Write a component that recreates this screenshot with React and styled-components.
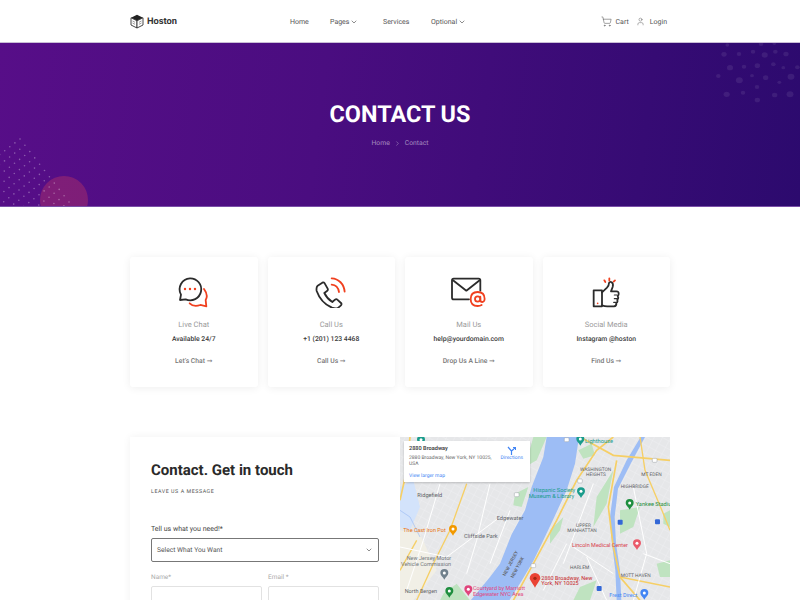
import React from 'react'
import styled, { createGlobalStyle } from 'styled-components'
import { ChevronDown, ChevronRight, ShoppingCart, User } from 'lucide-react'

const GlobalStyle = createGlobalStyle`
  html, body { margin: 0; padding: 0; height: 100%; overflow: hidden; background: #fff; }
  body { font-family: Roboto, "Liberation Sans", sans-serif; color: #222; text-rendering: geometricPrecision; }
  * { box-sizing: border-box; }
`

const Page = styled.div`
  height: 600px;
  overflow: hidden;
`

const Header = styled.header`
  height: 43px;
  background: #fff;
  border-bottom: 1px solid #c9bdd6;
  display: flex;
  align-items: center;
  padding: 1px 133px 0 130px;
`

const Brand = styled.div`
  width: 160px;
  display: flex;
  align-items: center;
  gap: 3px;
  font-size: 9.3px;
  font-weight: 700;
  color: #333;
`

const Nav = styled.nav`
  display: flex;
  align-items: center;
`

const NavItem = styled.a`
  display: flex;
  align-items: center;
  gap: 1px;
  width: ${({ $w }) => $w}px;
  font-size: 7px;
  color: #555;
`

const Actions = styled.div`
  margin-left: auto;
  display: flex;
  align-items: center;
  font-size: 7px;
  color: #555;
`

const CartLabel = styled.span`
  margin: 0 7px 0 4px;
`

const LoginLabel = styled.span`
  margin-left: 5px;
`

const Hero = styled.section`
  position: relative;
  height: 164px;
  overflow: hidden;
  background: linear-gradient(97deg, #570e88 0%, #4a0d80 40%, #2c0a6e 100%);
  border-bottom: 1px solid #7a4fa8;
  display: flex;
  flex-direction: column;
  align-items: center;
  color: #fff;
`

const Decor = styled.svg`
  position: absolute;
  left: 0;
  top: 0;
`

const HeroTitle = styled.h1`
  position: relative;
  margin: 57px 0 0;
  font-size: 23.4px;
  line-height: 28px;
  font-weight: 700;
`

const Crumbs = styled.div`
  position: relative;
  margin-top: 11px;
  display: flex;
  align-items: center;
  gap: 4px;
  font-size: 6.8px;
  color: rgba(255, 255, 255, 0.5);
`

const Cards = styled.section`
  display: grid;
  grid-template-columns: repeat(4, 127.5px);
  justify-content: space-between;
  margin: 50px 130px 0;
`

const Card = styled.article`
  height: 130px;
  padding-top: 18px;
  background: #fff;
  border-radius: 3px;
  box-shadow: 0 1px 8px rgba(0, 0, 0, 0.07);
  display: flex;
  flex-direction: column;
  align-items: center;
`

const CardIcon = styled.svg`
  width: 36.67px;
  height: 33.33px;
  fill: none;
  stroke-width: 5.4;
  stroke-linecap: round;
  stroke-linejoin: round;
`

const CardTitle = styled.div`
  margin-top: 11.5px;
  font-size: 7.5px;
  line-height: 10px;
  color: #9a9a9a;
`

const CardValue = styled.div`
  margin-top: 4px;
  font-size: 6.8px;
  line-height: 10px;
  font-weight: 500;
  color: #3a3a3a;
`

const CardLink = styled.a`
  margin-top: 12.5px;
  font-family: Roboto, "DejaVu Sans", sans-serif;
  font-size: 6.8px;
  line-height: 10px;
  font-weight: 500;
  color: #777;
`

const Contact = styled.section`
  display: flex;
  margin: 50px 130px 0;
  height: 260px;
`

const FormPanel = styled.div`
  width: 270px;
  padding: 24px 21px;
  background: #fff;
  box-shadow: 0 0 8px rgba(0, 0, 0, 0.06);
`

const Heading = styled.h2`
  margin: 0;
  font-size: 15px;
  line-height: 18px;
  font-weight: 700;
  color: #2a2a2a;
`

const Eyebrow = styled.div`
  margin-top: 9px;
  font-size: 5.3px;
  line-height: 8px;
  letter-spacing: 0.55px;
  color: #555;
`

const NeedLabel = styled.div`
  margin-top: 28px;
  font-size: 7px;
  line-height: 10px;
  color: #444;
`

const SelectBox = styled.div`
  margin-top: 4px;
  height: 24px;
  padding: 0 5px;
  border: 1px solid #777;
  border-radius: 2px;
  display: flex;
  align-items: center;
  justify-content: space-between;
  font-size: 6.7px;
  color: #555;
`

const FieldRow = styled.div`
  margin-top: 10px;
  display: grid;
  grid-template-columns: 1fr 1fr;
  gap: 6px;
`

const Field = styled.label`
  display: block;
  font-size: 6.5px;
  line-height: 10px;
  color: #aaa;
`

const FieldInput = styled.div`
  margin-top: 4px;
  height: 24px;
  border: 1px solid #e2e2e2;
  border-radius: 2px;
`

const MapPanel = styled.div`
  position: relative;
  flex: 1;
  overflow: hidden;
  background: #e8eaed;
`

const MapArt = styled.svg`
  display: block;
  width: 270px;
  height: 163.33px;
  font-family: Roboto, "Liberation Sans", sans-serif;
`

const MapCard = styled.div`
  position: absolute;
  left: 4px;
  top: 4px;
  width: 126px;
  height: 41px;
  padding: 5px;
  background: #fff;
  box-shadow: 0 1px 2px rgba(0, 0, 0, 0.2);
  display: flex;
  justify-content: space-between;
`

const MapCardText = styled.div`
  width: 88px;
  font-size: 5px;
  line-height: 6px;
  color: #666;
`

const MapCardName = styled.div`
  font-size: 5.6px;
  font-weight: 500;
  color: #333;
  margin-bottom: 3px;
`

const MapCardLink = styled.div`
  margin-top: 6px;
  color: #4285f4;
`

const DirectionLink = styled.div`
  margin-right: 2px;
  display: flex;
  flex-direction: column;
  align-items: center;
  font-size: 5px;
  color: #4285f4;
`

const leftDots = []
for (let i = 0; i <= 10; i++) {
  for (let j = 0; j <= 9; j++) {
    const x = 20 + i * 4.9 - j * 5.1
    const y = 96 + i * 6.3 + j * 3.9
    if (x > -2 && y < 165) leftDots.push([x, y])
  }
}

const blobs = [
  [142, 30, 5], [132, 58, 7], [177, 57, 6], [219, 50, 6], [254, 60, 8], [286, 50, 6], [318, 57, 7],
  [150, 98, 8], [192, 95, 6], [232, 92, 7], [280, 88, 6], [310, 98, 5], [352, 97, 6], [115, 123, 6],
  [178, 136, 9], [216, 122, 5], [257, 128, 7], [298, 142, 5], [333, 125, 9], [231, 156, 6],
  [140, 178, 8], [189, 173, 6], [284, 180, 7], [330, 178, 9], [232, 195, 7], [243, 27, 6], [283, 25, 5],
]

function HeroDecor() {
  return (
    <Decor width="800" height="164" viewBox="0 0 800 164">
      <circle cx="64" cy="157" r="24" fill="#d8405a" opacity="0.33" />
      {leftDots.map(([x, y]) => (
        <circle key={`${x}-${y}`} cx={x} cy={y} r="0.8" fill="#fff" opacity="0.32" />
      ))}
      {blobs.map(([x, y, r]) => (
        <ellipse key={`${x}-${y}`} cx={680 + x / 3} cy={y / 3 - 8} rx={r / 2.6} ry={r / 3} fill="#fff" opacity="0.08" />
      ))}
    </Decor>
  )
}

function Logo() {
  return (
    <svg width="14" height="15" viewBox="0 0 14 15">
      <path d="M7 .8 13 3.8 7 6.8 1 3.8Z" fill="#222" />
      <path d="M1 3.8 7 6.8V14L1 11Z" fill="#fff" stroke="#333" strokeWidth=".9" strokeLinejoin="round" />
      <path d="M13 3.8 7 6.8V14L13 11Z" fill="#fff" stroke="#333" strokeWidth=".9" strokeLinejoin="round" />
      <path d="M2.5 7 5 8.3M2.5 9 5 10.3M9 8.3 11.5 7M9 10.3 11.5 9" stroke="#777" strokeWidth=".7" />
    </svg>
  )
}

const DARK = '#2b2b2b'
const RED = '#f0401f'

function ChatIcon() {
  return (
    <CardIcon viewBox="151 60 110 100">
      <path d="M196 70a33 33 0 1 1-13 63l-17 2 3-16a33 33 0 0 1 27-49Z" stroke={DARK} />
      <path d="M238 102c9 12 10 25 5 33l2 19-18-4c-12 4-24 3-32-5" stroke={RED} />
      <g fill={RED} stroke="none">
        <circle cx="181" cy="102" r="3.6" />
        <circle cx="196" cy="102" r="3.6" />
        <circle cx="211" cy="102" r="3.6" />
      </g>
    </CardIcon>
  )
}

function PhoneIcon() {
  return (
    <CardIcon viewBox="565 60 110 100">
      <path d="M579 92l14-9q4-2 7 2l9 16q2 4-2 7l-8 6q8 17 24 27l8-7q4-3 7 0l11 10q3 3 0 7l-7 6q-7 6-20 1-33-14-46-50-2-11 3-16Z" stroke={DARK} />
      <path d="M621 89c12 1 20 10 22 22" stroke={RED} />
      <path d="M621 70c21 1 37 17 39 40" stroke={RED} />
    </CardIcon>
  )
}

function MailIcon() {
  return (
    <CardIcon viewBox="151 60 110 100">
      <path d="M208 133h-46q-5 0-5-5V76q0-5 5-5h75q5 0 5 5v31" stroke={DARK} />
      <path d="M160 76l40 31 40-31" stroke={DARK} />
      <circle cx="234" cy="132" r="8" stroke={RED} />
      <path d="M242 125v10q0 6 6 6t7-9q0-21-21-21t-21 21 21 21q7 0 12-3" stroke={RED} />
    </CardIcon>
  )
}

function LikeIcon() {
  return (
    <CardIcon viewBox="565 60 110 100">
      <path d="M582 106h25v48h-25Z" stroke={DARK} />
      <path d="M607 112l15-14q6-6 6-14 3-5 8-2 6 4 3 14l-5 13h16q8 0 7 8 0 4-3 6 4 6-1 11 2 7-3 10 1 9-7 10h-20q-8 0-16-3" stroke={DARK} />
      <path d="M644 120h8M644 131h7M642 142h6" stroke={DARK} strokeWidth="3.5" />
      <circle cx="594" cy="145" r="2.5" fill={RED} stroke="none" />
      <path d="M614 76l3 5M629 70v7M646 76l-4 4" stroke={RED} />
    </CardIcon>
  )
}

const cards = [
  { title: 'Live Chat', value: 'Available 24/7', link: 'Let\u2019s Chat \u2192', Icon: ChatIcon },
  { title: 'Call Us', value: '+1 (201) 123 4468', link: 'Call Us \u2192', Icon: PhoneIcon },
  { title: 'Mail Us', value: 'help@yourdomain.com', link: 'Drop Us A Line \u2192', Icon: MailIcon },
  { title: 'Social Media', value: 'Instagram @hoston', link: 'Find Us \u2192', Icon: LikeIcon },
]

const mapLabels = [
  { x: 52, y: 201, t: 'Ridgefield', fill: '#5f6368', size: 17 },
  { x: 290, y: 270, t: 'Edgewater', fill: '#5f6368', size: 17 },
  { x: 192, y: 323, t: 'Cliffside Park', fill: '#5f6368', size: 17 },
  { x: 540, y: 121, t: 'WASHINGTON', fill: '#5f6368', size: 14.5 },
  { x: 558, y: 136, t: 'HEIGHTS', fill: '#5f6368', size: 14.5 },
  { x: 724, y: 138, t: 'MT EDEN', fill: '#5f6368', size: 14.5 },
  { x: 662, y: 174, t: 'HIGHBRIDGE', fill: '#5f6368', size: 14.5 },
  { x: 528, y: 290, t: 'UPPER', fill: '#5f6368', size: 14.5 },
  { x: 502, y: 305, t: 'MANHATTAN', fill: '#5f6368', size: 14.5 },
  { x: 510, y: 417, t: 'HARLEM', fill: '#5f6368', size: 14.5 },
  { x: 662, y: 441, t: 'MOTT HAVEN', fill: '#5f6368', size: 14.5 },
  { x: 400, y: 185, t: 'Hispanic Society', fill: '#1a9c8c', size: 17 },
  { x: 386, y: 204, t: 'Museum & Library', fill: '#1a9c8c', size: 17 },
  { x: 555, y: 38, t: 'Lighthouse', fill: '#1a9c8c', size: 17 },
  { x: 707, y: 228, t: 'Yankee Stadium', fill: '#1e8e3e', size: 17 },
  { x: 10, y: 306, t: 'The Cast Iron Pot', fill: '#e8710a', size: 16.5 },
  { x: 516, y: 349, t: 'Lincoln Medical Center', fill: '#d93a4a', size: 16.5 },
  { x: 20, y: 389, t: 'New Jersey Motor', fill: '#70757a', size: 16.5 },
  { x: 3, y: 406, t: 'Vehicle Commission', fill: '#70757a', size: 16.5 },
  { x: 14, y: 488, t: 'North Bergen', fill: '#5f6368', size: 16.5 },
  { x: 219, y: 478, t: 'Courtyard by Marriott', fill: '#e0447c', size: 16.5 },
  { x: 219, y: 496, t: 'Edgewater NYC Area', fill: '#e0447c', size: 16.5 },
  { x: 424, y: 448, t: '2880 Broadway, New', fill: '#c5221f', size: 16.5 },
  { x: 424, y: 465, t: 'York, NY 10025', fill: '#c5221f', size: 16.5 },
  { x: 628, y: 499, t: 'Frest Direct', fill: '#4285f4', size: 16.5 },
]

const pins = [
  [63, 28, '#1a9c8c'], [541, 26, '#1a9c8c'], [543, 183, '#1a9c8c'], [689, 218, '#1e8e3e'],
  [159, 296, '#f29900'], [711, 339, '#ea5a6a'], [133, 428, '#70808c'], [148, 482, '#1e8e3e'],
  [205, 477, '#e0447c'], [733, 488, '#4285f4'],
]

const shields = [[500, 28], [540, 152], [350, 193], [400, 406], [764, 90]]

function MapDrawing() {
  return (
    <MapArt viewBox="0 20 810 490">
      <defs>
        <pattern id="blocks" width="22" height="22" patternUnits="userSpaceOnUse" patternTransform="rotate(28)">
          <path d="M0 0H22M0 0V22" stroke="#f7f7f8" strokeWidth="1.6" fill="none" />
        </pattern>
      </defs>
      <rect x="0" y="20" width="810" height="490" fill="#e6e7e9" />
      <rect x="0" y="20" width="810" height="490" fill="url(#blocks)" />
      <path d="M0 170 40 150 60 230 30 300 0 290Z" fill="#d3e3fb" />
      <path d="M0 300 60 310 110 420 40 510H0Z" fill="#f1efe6" />
      <path d="M130 490 170 460 210 510H120Z M400 20 440 20 410 90 375 110Z M345 190 385 170 365 230 340 225Z M590 200 640 120 620 220 580 290Z M660 240 720 230 700 290 660 310Z M770 400 810 390 810 440 780 440Z M540 470 590 450 570 510H520Z M450 300 490 260 480 300 450 340Z M535 60 575 40 585 75 550 85Z M790 250 810 240 810 290 790 280Z" fill="#bfe3c0" />
      <path d="M440 20H537L525 100 500 180 462 262 430 330 400 392 366 450 328 510H212L270 440 300 400 335 312 375 240 395 170 430 80Z" fill="#9dbdf5" />
      <path d="M722 20 680 90 642 170 630 260 636 340 646 420 650 510H664L660 420 648 340 644 260 654 175 692 100 735 20Z" fill="#9dbdf5" />
      <path d="M0 240 30 260 60 320" fill="none" stroke="#9dbdf5" strokeWidth="2" />
      <g fill="none" stroke="#f6cf65" strokeWidth="5">
        <path d="M340 510 400 400 470 270 530 150 590 60 640 20" />
        <path d="M540 20 640 75 810 90" />
        <path d="M650 90 625 230 640 350 660 440 720 510" />
        <path d="M0 210 20 120 30 20" />
        <path d="M50 510 100 400 150 300 200 160" strokeWidth="4" />
        <path d="M720 20 735 120 790 250 810 300" strokeWidth="4" />
        <path d="M660 440 810 470" strokeWidth="4" />
        <path d="M0 420 50 330" strokeWidth="4" />
      </g>
      <g fill="none" stroke="#fff" strokeWidth="3">
        <path d="M120 160 70 330 20 480" />
        <path d="M270 160 230 330 200 430" />
        <path d="M330 240 270 400" />
        <path d="M500 340 430 480" />
        <path d="M580 160 490 400" />
        <path d="M700 170 740 370 700 510" />
        <path d="M560 380 620 510" />
        <path d="M0 350 140 380 300 260" />
        <path d="M520 350 640 430" />
        <path d="M730 370 810 400" />
      </g>
      <g fill="#5f6368" fontSize="14" fontWeight="500">
        <text transform="translate(316 438) rotate(-62)">NEW JERSEY</text>
        <text transform="translate(340 444) rotate(-62)">NEW YORK</text>
      </g>
      {shields.map(([x, y]) => (
        <rect key={`${x}-${y}`} x={x - 7} y={y - 6} width="14" height="12" rx="3" fill="#fff" stroke="#9aa0a6" strokeWidth="1.5" />
      ))}
      {mapLabels.map(l => (
        <text key={l.t} x={l.x} y={l.y} fill={l.fill} fontSize={l.size}>{l.t}</text>
      ))}
      {pins.map(([x, y, c]) => (
        <g key={`${x}-${y}`}>
          <path d={`M${x} ${y + 20}C${x - 4} ${y + 12} ${x - 12} ${y + 7} ${x - 12} ${y}a12 12 0 1 1 24 0C${x + 12} ${y + 7} ${x + 4} ${y + 12} ${x} ${y + 20}Z`} fill={c} />
          <circle cx={x} cy={y} r="4.5" fill="#fff" />
        </g>
      ))}
      <rect x="653" y="268" width="15" height="15" rx="3" fill="#3367d6" />
      <rect x="765" y="267" width="15" height="15" rx="3" fill="#3367d6" />
      <rect x="590" y="467" width="15" height="15" rx="3" fill="#3367d6" />
      <path d="M405 472C395 455 389 448 389 444a16 16 0 1 1 32 0C421 448 415 455 405 472Z" fill="#ea4335" />
      <circle cx="405" cy="444" r="5" fill="#a52714" />
    </MapArt>
  )
}

export default function App() {
  return (
    <Page>
      <GlobalStyle />
      <Header>
        <Brand><Logo />Hoston</Brand>
        <Nav>
          <NavItem $w={40}>Home</NavItem>
          <NavItem $w={53}>Pages <ChevronDown size={8} strokeWidth={2} /></NavItem>
          <NavItem $w={48}>Services</NavItem>
          <NavItem $w={40}>Optional <ChevronDown size={8} strokeWidth={2} /></NavItem>
        </Nav>
        <Actions>
          <ShoppingCart size={11} strokeWidth={1.2} />
          <CartLabel>Cart</CartLabel>
          <User size={9} strokeWidth={1.2} />
          <LoginLabel>Login</LoginLabel>
        </Actions>
      </Header>
      <Hero>
        <HeroDecor />
        <HeroTitle>CONTACT US</HeroTitle>
        <Crumbs>Home <ChevronRight size={7} /> Contact</Crumbs>
      </Hero>
      <Cards>
        {cards.map(({ title, value, link, Icon }) => (
          <Card key={title}>
            <Icon />
            <CardTitle>{title}</CardTitle>
            <CardValue>{value}</CardValue>
            <CardLink>{link}</CardLink>
          </Card>
        ))}
      </Cards>
      <Contact>
        <FormPanel>
          <Heading>Contact. Get in touch</Heading>
          <Eyebrow>LEAVE US A MESSAGE</Eyebrow>
          <NeedLabel>Tell us what you need!*</NeedLabel>
          <SelectBox>Select What You Want <ChevronDown size={8} /></SelectBox>
          <FieldRow>
            <Field>Name*<FieldInput /></Field>
            <Field>Email *<FieldInput /></Field>
          </FieldRow>
        </FormPanel>
        <MapPanel>
          <MapDrawing />
          <MapCard>
            <MapCardText>
              <MapCardName>2880 Broadway</MapCardName>
              2880 Broadway, New York, NY 10025, USA
              <MapCardLink>View larger map</MapCardLink>
            </MapCardText>
            <DirectionLink>
              <svg width="9" height="9" viewBox="0 0 9 9" fill="none" stroke="#4285f4" strokeWidth="1.2">
                <path d="M4.5 9V5L1 1M4.5 5 8 2M6 1.5H8.5V4" />
              </svg>
              Directions
            </DirectionLink>
          </MapCard>
        </MapPanel>
      </Contact>
    </Page>
  )
}
